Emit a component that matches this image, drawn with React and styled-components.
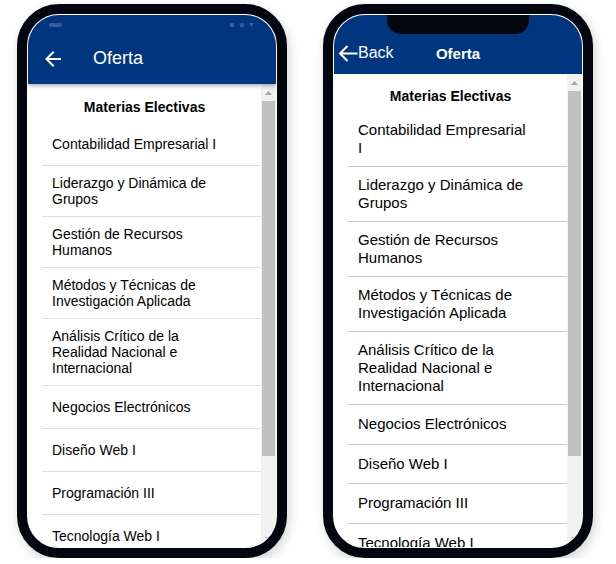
import styled, { createGlobalStyle } from 'styled-components';

const GlobalStyle = createGlobalStyle`
  html, body {
    margin: 0;
    padding: 0;
    background: #ffffff;
    font-family: "Liberation Sans", Arial, sans-serif;
  }
`;

const subjects = [
  'Contabilidad Empresarial I',
  'Liderazgo y Dinámica de Grupos',
  'Gestión de Recursos Humanos',
  'Métodos y Técnicas de Investigación Aplicada',
  'Análisis Crítico de la Realidad Nacional e Internacional',
  'Negocios Electrónicos',
  'Diseño Web I',
  'Programación III',
  'Tecnología Web I',
];

const Stage = styled.div`
  display: flex;
  flex-direction: row;
  align-items: flex-start;
  gap: 36px;
  padding: 4px 0 0 17px;
`;

const Phone = styled.div`
  width: 270px;
  box-sizing: border-box;
  border: 10px solid #03060f;
  border-radius: 42px;
  padding: 1px;
  background: #ffffff;
  box-shadow: 2px 4px 12px rgba(0, 0, 0, 0.18);
`;

const Screen = styled.div`
  height: 532px;
  border-radius: 31px;
  overflow: hidden;
  display: flex;
  flex-direction: column;
  background: #ffffff;
`;

/* android style header */
const AndroidHeader = styled.div`
  background: #003580;
  display: flex;
  flex-direction: column;
  padding-bottom: 2px;
  box-shadow: 0 2px 4px rgba(0, 0, 0, 0.3);
  position: relative;
  z-index: 1;
`;

const StatusBar = styled.div`
  height: 20px;
  display: flex;
  align-items: center;
  justify-content: space-between;
  padding: 0 22px 0 21px;
`;

const Pill = styled.div`
  width: 13px;
  height: 4px;
  border-radius: 2px;
  background: #3a5b93;
`;

const StatusIcons = styled.div`
  display: flex;
  align-items: center;
  gap: 6px;
`;

const Toolbar = styled.div`
  height: 47px;
  display: flex;
  align-items: center;
  padding-left: 13px;
  color: #ffffff;
`;

const ToolbarTitle = styled.div`
  font-size: 18px;
  margin-left: 28px;
`;

/* ios style header */
const IosHeader = styled.div`
  background: #003580;
  display: flex;
  flex-direction: column;
  align-items: center;
  padding-bottom: 2px;
`;

const Notch = styled.div`
  width: 142px;
  height: 19px;
  background: #03060f;
  border-radius: 0 0 14px 14px;
`;

const IosToolbar = styled.div`
  align-self: stretch;
  height: 38px;
  display: grid;
  grid-template-columns: 1fr auto 1fr;
  align-items: center;
  color: #ffffff;
`;

const BackButton = styled.div`
  display: flex;
  align-items: center;
  margin-left: 4px;
  font-size: 16px;
`;

const IosTitle = styled.div`
  font-size: 15px;
  font-weight: bold;
`;

const Body = styled.div`
  flex: 1;
  display: flex;
  flex-direction: row;
  min-height: 0;
`;

const Content = styled.div`
  flex: 1;
  overflow: hidden;
  padding: ${(p) => p.$top}px 0 0 14px;
`;

const SectionTitle = styled.div`
  font-size: 14px;
  font-weight: bold;
  line-height: 16px;
  text-align: center;
  color: #000000;
  margin: 0 0 8px -14px;
`;

const List = styled.ul`
  list-style: none;
  margin: 0;
  padding: 0;
`;

const Item = styled.li`
  display: flex;
  align-items: center;
  box-sizing: border-box;
  min-height: ${(p) => p.$minHeight}px;
  padding: 9px ${(p) => p.$padRight}px 9px 10px;
  border-bottom: 1px solid ${(p) => p.$line};
  font-size: ${(p) => p.$size}px;
  line-height: ${(p) => p.$lineHeight}px;
  color: #000000;
`;

const Scrollbar = styled.div`
  width: 15px;
  background: #f1f1f1;
  display: flex;
  flex-direction: column;
  align-items: center;
`;

const ArrowButton = styled.div`
  height: 17px;
  width: 100%;
  display: flex;
  align-items: center;
  justify-content: center;
`;

const Thumb = styled.div`
  align-self: stretch;
  margin: 0 1px;
  height: ${(p) => p.$height}px;
  background: #c1c1c1;
`;

const Spacer = styled.div`
  flex: 1;
`;

function Triangle({ down }) {
  return (
    <svg width="7" height="4" viewBox="0 0 7 4">
      <polygon points={down ? '0,0 7,0 3.5,4' : '0,4 7,4 3.5,0'} fill="#a3a3a3" />
    </svg>
  );
}

function FakeScrollbar({ thumb }) {
  return (
    <Scrollbar>
      <ArrowButton><Triangle /></ArrowButton>
      <Thumb $height={thumb} />
      <Spacer />
      <ArrowButton><Triangle down /></ArrowButton>
    </Scrollbar>
  );
}

function SubjectList({ variant }) {
  const ios = variant === 'ios';
  return (
    <List>
      {subjects.map((s) => (
        <Item
          key={s}
          $size={ios ? 15 : 14}
          $lineHeight={ios ? 18 : 16}
          $minHeight={ios ? 39.5 : 43}
          $padRight={ios ? 37 : 26}
          $line={ios ? '#c8c8c8' : '#dedede'}
        >
          {s}
        </Item>
      ))}
    </List>
  );
}

function AndroidPhone() {
  return (
    <Phone>
      <Screen>
        <AndroidHeader>
          <StatusBar>
            <Pill />
            <StatusIcons>
              <svg width="24" height="6" viewBox="0 0 24 6">
                <rect x="0" y="1" width="4" height="4" fill="#3a5b93" />
                <circle cx="12" cy="3" r="2.3" fill="#3a5b93" />
                <polygon points="19,1 24,1 21.5,5" fill="#3a5b93" />
              </svg>
            </StatusIcons>
          </StatusBar>
          <Toolbar>
            <svg width="24" height="24" viewBox="0 0 24 24">
              <path d="M20 11H7.83l5.59-5.59L12 4l-8 8 8 8 1.41-1.41L7.83 13H20v-2z" fill="#ffffff" />
            </svg>
            <ToolbarTitle>Oferta</ToolbarTitle>
          </Toolbar>
        </AndroidHeader>
        <Body>
          <Content $top={15}>
            <SectionTitle>Materias Electivas</SectionTitle>
            <SubjectList variant="android" />
          </Content>
          <FakeScrollbar thumb={355} />
        </Body>
      </Screen>
    </Phone>
  );
}

function IosPhone() {
  return (
    <Phone>
      <Screen>
        <IosHeader>
          <Notch />
          <IosToolbar>
            <BackButton>
              <svg width="20" height="17" viewBox="0 0 20 17">
                <path d="M19.5 8.5H2 M9.5 1L2 8.5l7.5 7.5" stroke="#ffffff" strokeWidth="2" fill="none" />
              </svg>
              Back
            </BackButton>
            <IosTitle>Oferta</IosTitle>
            <div />
          </IosToolbar>
        </IosHeader>
        <Body>
          <Content $top={14}>
            <SectionTitle>Materias Electivas</SectionTitle>
            <SubjectList variant="ios" />
          </Content>
          <FakeScrollbar thumb={365} />
        </Body>
      </Screen>
    </Phone>
  );
}

export default function App() {
  return (
    <>
      <GlobalStyle />
      <Stage>
        <AndroidPhone />
        <IosPhone />
      </Stage>
    </>
  );
}
